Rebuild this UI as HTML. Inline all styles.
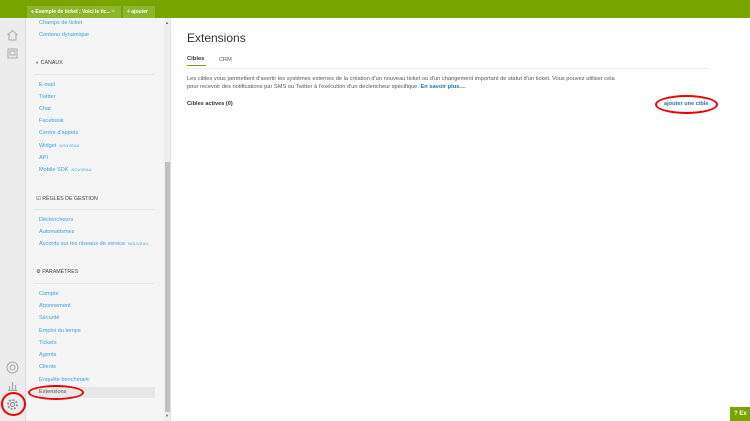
<!DOCTYPE html>
<html><head><meta charset="utf-8"><style>
*{margin:0;padding:0;box-sizing:border-box}
body{width:750px;height:421px;overflow:hidden;background:#fff;font-family:"Liberation Sans","DejaVu Sans",sans-serif;position:relative}
.top{position:absolute;left:0;top:0;width:750px;height:18px;background:#78a300}
.tab{position:absolute;top:6px;height:12px;background:#8db72b;color:#fff;font-size:5px;font-weight:bold;line-height:12px;padding-left:4px}
.rail{position:absolute;left:0;top:18px;width:26px;height:403px;background:#ececec;border-right:1px solid #ddd}
.side{position:absolute;left:26px;top:18px;width:138px;height:403px;background:#f5f5f5}
.sb{position:absolute;left:164px;top:18px;width:7px;height:403px;background:#eee;border-right:1px solid #e0e0e0}
.thumb{position:absolute;left:165px;top:162px;width:5px;height:250px;background:#c1c1c1}
.l{position:absolute;left:39px;font-size:5.6px;color:#3aa0d8;line-height:7px}
.n{font-size:3.8px;color:#3aa0d8;margin-left:3px;letter-spacing:.2px}
.h{position:absolute;left:36px;font-size:5.3px;color:#444;line-height:7px}
.hr{position:absolute;left:34px;width:120px;height:1px;background:#e6e6e6}
.sel{position:absolute;left:30px;top:387px;width:125px;height:11px;background:#e8e8e8}
.oval{position:absolute;border:2.5px solid #e00;border-radius:50%}
</style></head><body>
<div class="top"></div>
<div class="tab" style="left:27px;width:94px">&#9679; Exemple de ticket : Voici le tic... <span style="color:#cde09a">×</span></div>
<div class="tab" style="left:123px;width:32px">+ ajouter</div>
<div class="rail"></div>
<svg style="position:absolute;left:6px;top:29px" width="13" height="12"><path d="M1.5 6L6.5 1.5 11.5 6M3 5v6h7V5" fill="none" stroke="#aaa" stroke-width="1"/></svg>
<svg style="position:absolute;left:7px;top:48px" width="11" height="11"><rect x="1" y="1" width="9" height="9" fill="none" stroke="#aaa"/><rect x="3" y="3" width="5" height="4" fill="none" stroke="#aaa"/></svg>
<svg style="position:absolute;left:6px;top:361px" width="13" height="13"><circle cx="6.5" cy="6.5" r="5.5" fill="none" stroke="#aaa"/><circle cx="6.5" cy="6.5" r="2.5" fill="none" stroke="#aaa"/></svg>
<svg style="position:absolute;left:7px;top:380px" width="11" height="11"><path d="M1 10.5h9M2.5 10V6M5.5 10V2M8.5 10V5" stroke="#aaa" stroke-width="1.3" fill="none"/></svg>
<svg style="position:absolute;left:6px;top:398px" width="13" height="13"><circle cx="6.5" cy="6.5" r="4.5" fill="none" stroke="#888" stroke-width="1.6" stroke-dasharray="2 1.5"/><circle cx="6.5" cy="6.5" r="2" fill="none" stroke="#888"/></svg>
<div class="oval" style="left:1px;top:392px;width:25px;height:24px"></div>
<div class="side"></div>
<div class="sel"></div>
<div class="sb"></div><div class="thumb"></div>
<div style="position:absolute;left:165px;top:20px;font-size:4px;color:#666">▲</div>
<div style="position:absolute;left:165px;top:413px;font-size:4px;color:#666">▼</div>
<div class="l" style="top:20px">Champs de ticket</div>
<div class="l" style="top:32px">Contenu dynamique</div>
<div class="h" style="top:60px">&#9680; CANAUX</div><div class="hr" style="top:74px"></div>
<div class="l" style="top:82px">E-mail</div>
<div class="l" style="top:94px">Twitter</div>
<div class="l" style="top:106px">Chat</div>
<div class="l" style="top:118px">Facebook</div>
<div class="l" style="top:130px">Centre d'appels</div>
<div class="l" style="top:143px">Widget<span class="n">NOUVEAU</span></div>
<div class="l" style="top:155px">API</div>
<div class="l" style="top:167px">Mobile SDK<span class="n">NOUVEAU</span></div>
<div class="h" style="top:196px">&#9745; RÈGLES DE GESTION</div><div class="hr" style="top:209px"></div>
<div class="l" style="top:217px">Déclencheurs</div>
<div class="l" style="top:229px">Automatismes</div>
<div class="l" style="top:241px">Accords sur les niveaux de service<span class="n">NOUVEAU</span></div>
<div class="h" style="top:269px">&#9881; PARAMÈTRES</div><div class="hr" style="top:283px"></div>
<div class="l" style="top:291px">Compte</div>
<div class="l" style="top:303px">Abonnement</div>
<div class="l" style="top:315px">Sécurité</div>
<div class="l" style="top:328px">Emploi du temps</div>
<div class="l" style="top:340px">Tickets</div>
<div class="l" style="top:352px">Agents</div>
<div class="l" style="top:364px">Clients</div>
<div class="l" style="top:377px">Enquête benchmark</div>
<div class="l" style="top:389px;color:#555">Extensions</div>
<div class="oval" style="left:28px;top:385px;width:56px;height:15px"></div>
<div style="position:absolute;left:187px;top:31px;font-size:12px;color:#333">Extensions</div>
<div style="position:absolute;left:187px;top:56px;font-size:5.8px;font-weight:bold;color:#333">Cibles</div>
<div style="position:absolute;left:219px;top:57px;font-size:5.6px;color:#555">CRM</div>
<div style="position:absolute;left:187px;top:65px;width:19px;height:1px;background:#78a300"></div>
<div style="position:absolute;left:187px;top:68px;width:522px;height:1px;background:#eee"></div>
<div style="position:absolute;left:187px;top:75px;font-size:5.7px;color:#555;line-height:8px;width:434px">Les cibles vous permettent d'avertir les systèmes externes de la création d'un nouveau ticket ou d'un changement important de statut d'un ticket. Vous pouvez utiliser cela pour recevoir des notifications par SMS ou Twitter à l'exécution d'un déclencheur spécifique. <b style="color:#1f73b7">En savoir plus....</b></div>
<div style="position:absolute;left:187px;top:101px;font-size:5.6px;font-weight:bold;color:#333">Cibles actives (0)</div>
<div style="position:absolute;left:664px;top:101px;font-size:5.6px;font-weight:bold;color:#1f73b7">ajouter une cible</div>
<div class="oval" style="left:655px;top:95px;width:63px;height:19px"></div>
<div style="position:absolute;left:730px;top:407px;width:20px;height:14px;background:#78a300;color:#fff;font-size:6px;font-weight:bold;line-height:14px;padding-left:4px">? Ex</div>
</body></html>
